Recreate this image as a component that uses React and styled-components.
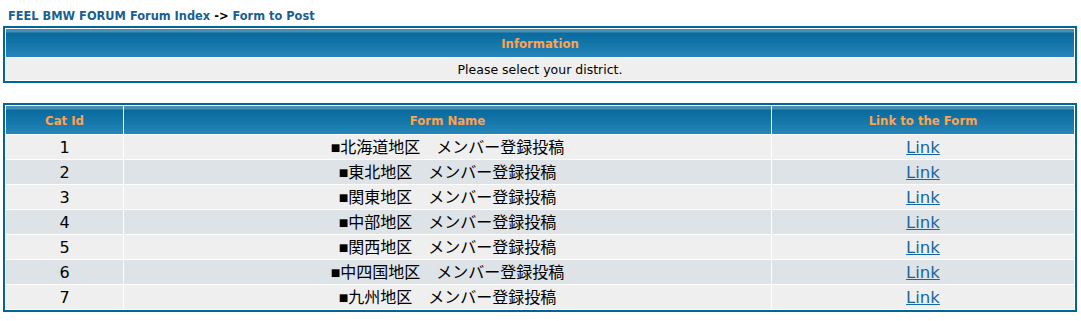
import React from "react";
import styled, { createGlobalStyle } from "styled-components";

const GlobalStyle = createGlobalStyle`
  body {
    margin: 0;
    background: #ffffff;
    font-family: "DejaVu Sans", Verdana, sans-serif;
  }
`;

const Page = styled.div`
  padding: 7px 4px 0 3px;
`;

const Nav = styled.div`
  padding-left: 5px;
  margin-bottom: 1px;
  line-height: 18px;
  font-size: 11.4px;
  font-weight: bold;
  color: #000;
`;

const NavLink = styled.a`
  color: #1a5f92;
  text-decoration: none;
`;

const ForumLine = styled.table`
  width: 100%;
  border: 2px solid #006699;
  border-spacing: 1px;
  background: #ffffff;
  margin-bottom: ${(p) => p.$gap || 0}px;
  table-layout: fixed;
`;

const Th = styled.th`
  height: 27px;
  padding: 1px 0 0;
  line-height: 18px;
  font-size: 11.7px;
  font-weight: bold;
  color: #ffa34f;
  text-align: center;
  background: linear-gradient(
    to bottom,
    #4a8db2 0px,
    #4a8db2 3px,
    #086a9e 4px,
    #0e70a3 10px,
    #2586b8 28px
  );
  width: ${(p) => (p.$w ? `${p.$w}px` : "auto")};
`;

const Info = styled.td`
  height: 22px;
  padding: 0;
  background: #efefef;
  text-align: center;
  font-size: 12.5px;
  color: #000;
`;

const Cell = styled.td`
  height: 22px;
  padding: 2px 0 0;
  line-height: 20px;
  text-align: center;
  background: ${(p) => (p.$alt ? "#dee3e7" : "#efefef")};
  font-size: 16px;
  color: #000;
`;

const FormName = styled.span`
  font-family: "Liberation Sans", "Noto Sans CJK JP", sans-serif;
  font-size: 16px;
`;

const Link = styled.a`
  color: #15669e;
  text-decoration: underline;
  font-size: 16.5px;
`;

const forms = [
  "北海道地区",
  "東北地区",
  "関東地区",
  "中部地区",
  "関西地区",
  "中四国地区",
  "九州地区",
];

export default function App() {
  return (
    <Page>
      <GlobalStyle />
      <Nav>
        <NavLink href="#">FEEL BMW FORUM Forum Index</NavLink> -&gt;{" "}
        <NavLink href="#">Form to Post</NavLink>
      </Nav>

      <ForumLine $gap={20}>
        <tbody>
          <tr>
            <Th>Information</Th>
          </tr>
          <tr>
            <Info>Please select your district.</Info>
          </tr>
        </tbody>
      </ForumLine>

      <ForumLine>
        <thead>
          <tr>
            <Th $w={117}>Cat Id</Th>
            <Th $w={647}>Form Name</Th>
            <Th>Link to the Form</Th>
          </tr>
        </thead>
        <tbody>
          {forms.map((name, i) => (
            <tr key={name}>
              <Cell $alt={i % 2 === 1}>{i + 1}</Cell>
              <Cell $alt={i % 2 === 1}>
                <FormName>■{name}　メンバー登録投稿</FormName>
              </Cell>
              <Cell $alt={i % 2 === 1}>
                <Link href="#">Link</Link>
              </Cell>
            </tr>
          ))}
        </tbody>
      </ForumLine>
    </Page>
  );
}
